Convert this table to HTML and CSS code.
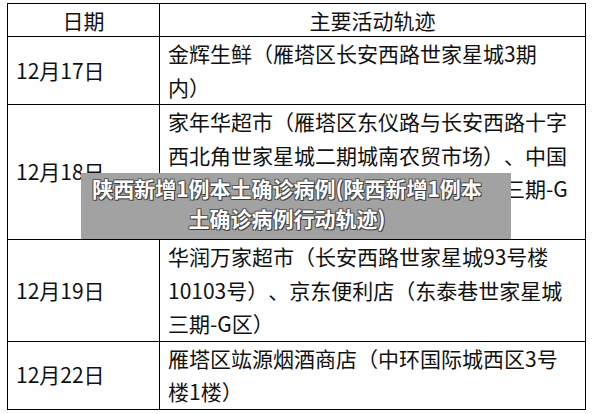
FILE: index.html
```html
<!DOCTYPE html>
<html lang="zh-CN">
<head>
<meta charset="utf-8">
<title>陕西新增1例本土确诊病例行动轨迹</title>
<link rel="stylesheet" href="styles.css">
</head>
<body>
<div class="page">
  <div class="board">
    <table class="trace">
      <thead>
        <tr><th class="date-col">日期</th><th class="track-col">主要活动轨迹</th></tr>
      </thead>
      <tbody>
        <tr class="r1">
          <td class="date">12月17日</td>
          <td class="track">金辉生鲜（雁塔区长安西路世家星城3期<br>内）</td>
        </tr>
        <tr class="r2">
          <td class="date">12月18日</td>
          <td class="track">家年华超市（雁塔区东仪路与长安西路十字<br>西北角世家星城二期城南农贸市场）、中国<br>建设银行（雁塔区长安西路世家星城三期-G<br>区）</td>
        </tr>
        <tr class="r3">
          <td class="date">12月19日</td>
          <td class="track">华润万家超市（长安西路世家星城93号楼<br>10103号）、京东便利店（东泰巷世家星城<br>三期-G区）</td>
        </tr>
        <tr class="r4">
          <td class="date">12月22日</td>
          <td class="track">雁塔区竑源烟酒商店（中环国际城西区3号<br>楼1楼）</td>
        </tr>
      </tbody>
    </table>
    <div class="caption">陕西新增1例本土确诊病例(陕西新增1例本<br>土确诊病例行动轨迹)</div>
  </div>
</div>
</body>
</html>
```

FILE: styles.css
```css
html, body {
  margin: 0;
  padding: 0;
  background: #ffffff;
}

.page {
  padding: 3px 0 0 7px;
  font-family: "Noto Sans CJK SC", "Microsoft YaHei", sans-serif;
  color: #111111;
  text-spacing-trim: space-all;
}

.board {
  position: relative;
  width: 579px;
}

.trace {
  border-collapse: collapse;
  width: 579px;
  table-layout: fixed;
  font-size: 21px;
}

.trace th,
.trace td {
  border: 1.5px solid #000000;
  padding: 0;
  white-space: nowrap;
  vertical-align: middle;
}

.trace th {
  font-weight: normal;
  text-align: center;
  line-height: 32px;
}

.date-col {
  width: 151px;
}

.trace td {
  line-height: 33.5px;
}

.date {
  padding-left: 8px !important;
  text-align: left;
}

.track {
  padding-left: 8px !important;
  text-align: left;
}

.caption {
  position: absolute;
  left: 74px;
  top: 170px;
  width: 430px;
  height: 66px;
  box-sizing: border-box;
  padding: 0 18px 0 0;
  background: #a2a2a2;
  color: #ffffff;
  font-weight: bold;
  font-size: 21px;
  line-height: 30px;
  text-align: center;
  white-space: nowrap;
  text-shadow: 1px 1px 0 #3a3a3a, -1px -1px 0 #5a5a5a, 1px -1px 0 #5a5a5a, -1px 1px 0 #5a5a5a;
}
```
